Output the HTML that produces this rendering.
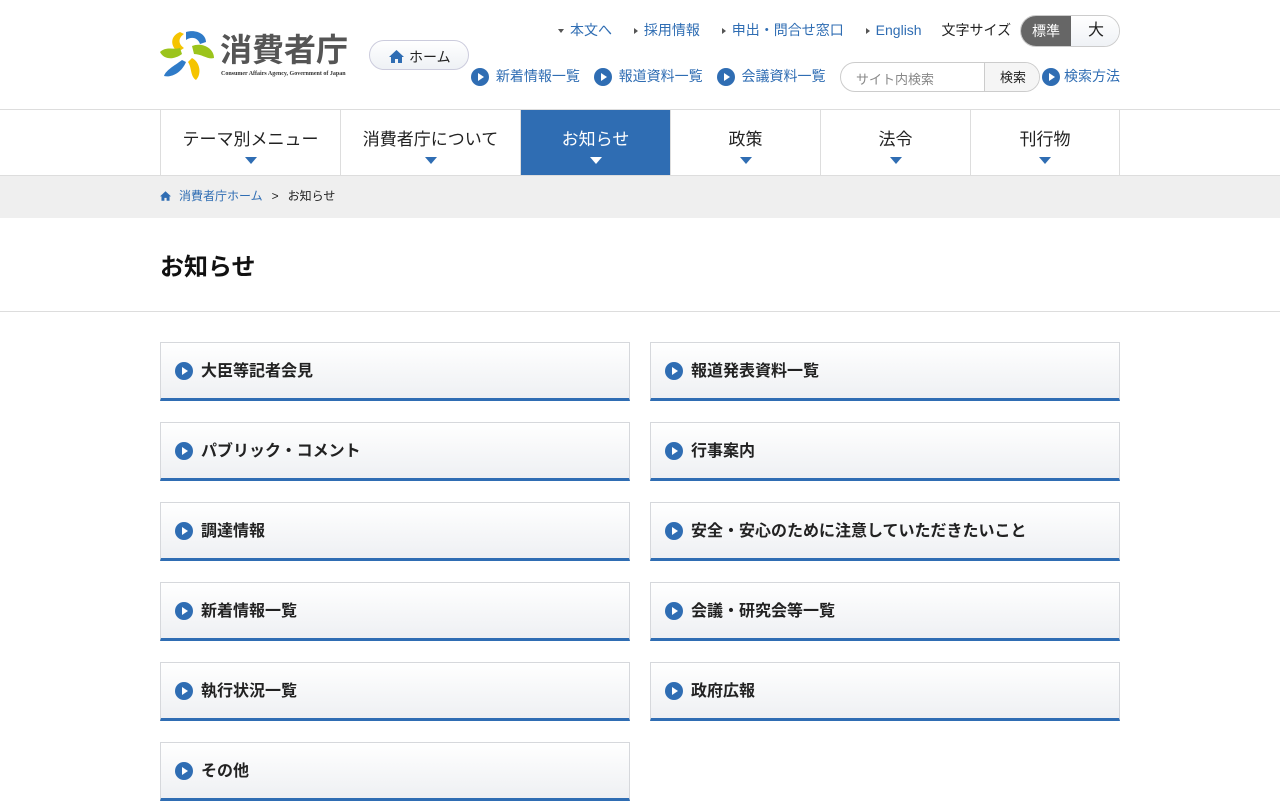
<!DOCTYPE html>
<html><head><meta charset="utf-8"><style>
*{box-sizing:border-box;margin:0;padding:0}
body{width:1280px;height:800px;overflow:hidden;background:#fff;font-family:"Liberation Sans","Noto Sans CJK JP",sans-serif;color:#222}
a{color:#2f6db3;text-decoration:none}
.abs{position:absolute}
.circ{display:inline-block;width:18px;height:18px;border-radius:50%;background:#2f6db3;position:relative;vertical-align:middle}
.circ:after{content:"";position:absolute;left:7px;top:5px;border-left:6px solid #fff;border-top:4px solid transparent;border-bottom:4px solid transparent}
.tri{display:inline-block;border-left:4px solid #555;border-top:3.5px solid transparent;border-bottom:3.5px solid transparent;margin-right:6px;vertical-align:middle}
.nav{position:absolute;top:109px;left:0;width:1280px;height:67px;border-top:1px solid #ddd;border-bottom:1px solid #ddd}
.nav div{position:absolute;top:0;height:65px;border-left:1px solid #ddd;text-align:center;font-size:17px;padding-top:15px;color:#222}
.nav div:after{content:"";position:absolute;left:50%;margin-left:-6px;top:47px;border-top:7px solid #2f6db3;border-left:6px solid transparent;border-right:6px solid transparent}
.nav .on{background:#2f6db3;color:#fff}
.nav .on:after{border-top-color:#fff}
.card{position:absolute;width:470px;height:59px;border:1px solid #d6d8dc;border-bottom:3px solid #2f6db3;background:linear-gradient(#fff,#eef0f3);font-size:16px;font-weight:bold;padding:14px 0 0 14px;color:#222}
.card .circ{margin-right:8px;top:-1px}
</style></head><body>
<svg class="abs" style="left:160px;top:30px" width="56" height="52" viewBox="0 0 56 52">
<path d="M20 2 C10 6 10 16 18 22 L24 18 C18 14 18 8 24 4Z" fill="#f5c400"/>
<path d="M26 2 C36 -1 46 4 46 12 L40 14 C38 8 32 6 26 10Z" fill="#2f7bc8"/>
<path d="M32 16 C42 12 54 18 54 28 C48 30 42 24 34 24Z" fill="#9cc41c"/>
<path d="M32 28 C40 32 42 44 36 50 C30 46 32 38 28 32Z" fill="#f5c400"/>
<path d="M26 32 C22 42 12 48 4 46 C6 40 14 36 22 30Z" fill="#2f7bc8"/>
<path d="M22 24 C14 30 4 30 0 22 C6 16 14 20 20 18Z" fill="#9cc41c"/>
</svg>
<div class="abs" style="left:220px;top:32px;font-size:32px;color:#555;font-weight:bold;letter-spacing:0px;line-height:36px">消費者庁</div>
<div class="abs" style="left:221px;top:71px;font-size:6px;color:#333;font-family:'Liberation Serif',serif;font-weight:bold">Consumer Affairs Agency, Government of Japan</div>
<div class="abs" style="left:369px;top:40px;width:100px;height:30px;border:1px solid #ccd;border-radius:15px;background:linear-gradient(#fff,#eef1f5);font-size:14px;padding:6px 0 0 19px"><svg width="15" height="13" viewBox="0 0 15 13" style="vertical-align:-1px;margin-right:5px"><path d="M7.5 0 L15 7 H13 V13 H9 V9 H6 V13 H2 V7 H0Z" fill="#2f6db3"/></svg>ホーム</div>

<div class="abs" style="top:20px;left:558px;font-size:14px;white-space:nowrap">
<span style="display:inline-block;border-top:4px solid #555;border-left:3.5px solid transparent;border-right:3.5px solid transparent;margin-right:6px;vertical-align:middle"></span><a>本文へ</a>
<span class="tri" style="margin-left:18px"></span><a>採用情報</a>
<span class="tri" style="margin-left:18px"></span><a>申出・問合せ窓口</a>
<span class="tri" style="margin-left:18px"></span><a>English</a>
<span style="margin-left:16px;color:#222">文字サイズ</span></div>
<div class="abs" style="left:1020px;top:15px;width:100px;height:32px;border:1px solid #ccc;border-radius:16px;overflow:hidden;font-size:15px">
<div class="abs" style="left:0;top:0;width:50px;height:32px;background:#666;color:#fff;text-align:center;line-height:30px;font-size:14px">標準</div>
<div class="abs" style="left:50px;top:0;width:50px;height:32px;background:linear-gradient(#fff,#eef1f5);text-align:center;line-height:30px;font-size:16px">大</div></div>

<div class="abs" style="top:66px;left:471px;font-size:14px;white-space:nowrap">
<span class="circ"></span> <a style="margin-left:3px">新着情報一覧</a>
<span class="circ" style="margin-left:10px"></span> <a style="margin-left:3px">報道資料一覧</a>
<span class="circ" style="margin-left:10px"></span> <a style="margin-left:3px">会議資料一覧</a></div>
<div class="abs" style="left:840px;top:62px;width:200px;height:30px;border:1px solid #ccc;border-radius:15px;overflow:hidden">
<div class="abs" style="left:15px;top:6px;font-size:13px;color:#888">サイト内検索</div>
<div class="abs" style="left:143px;top:0;width:57px;height:30px;border-left:1px solid #ccc;background:#f5f5f5;font-size:13px;text-align:center;line-height:30px">検索</div></div>
<div class="abs" style="top:66px;left:1042px;font-size:14px;white-space:nowrap"><span class="circ"></span><a style="margin-left:4px">検索方法</a></div>

<div class="nav">
<div style="left:160px;width:180px">テーマ別メニュー</div>
<div style="left:340px;width:180px">消費者庁について</div>
<div class="on" style="left:520px;width:150px">お知らせ</div>
<div style="left:670px;width:150px">政策</div>
<div style="left:820px;width:150px">法令</div>
<div style="left:970px;width:150px;border-right:1px solid #ddd">刊行物</div>
</div>
<div class="abs" style="top:176px;left:0;width:1280px;height:42px;background:#efefef;font-size:12px;padding:11px 0 0 160px"><svg width="11" height="10" viewBox="0 0 15 13" style="vertical-align:-1px;margin-right:8px"><path d="M7.5 0 L15 7 H13 V13 H9 V9 H6 V13 H2 V7 H0Z" fill="#2f6db3"/></svg><a>消費者庁ホーム</a><span style="margin:0 9px">&gt;</span>お知らせ</div>
<div class="abs" style="top:247px;left:160px;font-size:24px;font-weight:bold;color:#111">お知らせ</div>
<div class="abs" style="top:311px;left:0;width:1280px;border-top:1px solid #ddd"></div>

<div class="card" style="left:160px;top:342px"><span class="circ"></span>大臣等記者会見</div>
<div class="card" style="left:650px;top:342px"><span class="circ"></span>報道発表資料一覧</div>
<div class="card" style="left:160px;top:422px"><span class="circ"></span>パブリック・コメント</div>
<div class="card" style="left:650px;top:422px"><span class="circ"></span>行事案内</div>
<div class="card" style="left:160px;top:502px"><span class="circ"></span>調達情報</div>
<div class="card" style="left:650px;top:502px"><span class="circ"></span>安全・安心のために注意していただきたいこと</div>
<div class="card" style="left:160px;top:582px"><span class="circ"></span>新着情報一覧</div>
<div class="card" style="left:650px;top:582px"><span class="circ"></span>会議・研究会等一覧</div>
<div class="card" style="left:160px;top:662px"><span class="circ"></span>執行状況一覧</div>
<div class="card" style="left:650px;top:662px"><span class="circ"></span>政府広報</div>
<div class="card" style="left:160px;top:742px"><span class="circ"></span>その他</div>
</body></html>
